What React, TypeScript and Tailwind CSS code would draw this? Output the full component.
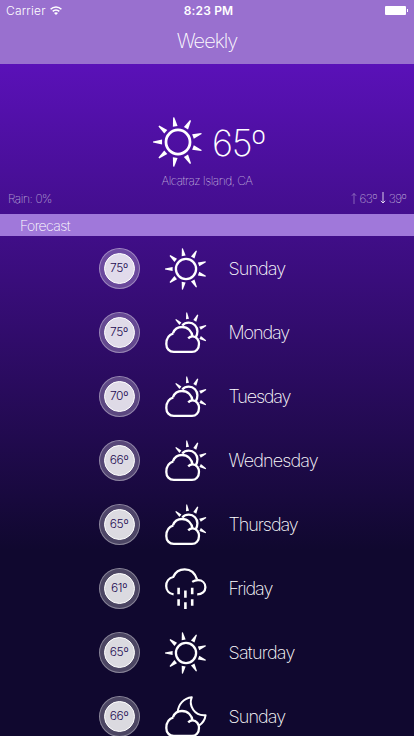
type IconName = "sun" | "partly" | "rain" | "night";

const RAY_ANGLES = [0, 40, 80, 120, 160, 200, 240, 280, 320];

function CloudShape() {
  return (
    <>
      <path d="M8 21.2C9.4 17.4 13 15 17 15C22.6 15 27 19 27.6 25" />
      <path d="M23.2 26.4C24.5 25 26 24.4 27.6 24.4C31.6 24.4 34 28 34 32C34 36.6 31 39.9 27 39.9H8.8C4.2 39.9 1.3 36.5 1.3 32C1.3 26.5 4 22.8 8.4 21.4" />
    </>
  );
}

function WeatherIcon({ name, className }: { name: IconName; className: string }) {
  return (
    <svg
      viewBox="0 0 42 42"
      className={className}
      fill="none"
      stroke="white"
      strokeWidth="2.3"
      strokeLinejoin="round"
    >
      {name === "sun" && (
        <>
          <circle cx="21" cy="21" r="10.1" />
          {RAY_ANGLES.map((a) => (
            <path key={a} d="M0 20.5L7.6 19V23L0 21.5Z" transform={`rotate(${a} 21 21)`} fill="white" stroke="none" />
          ))}
        </>
      )}
      {name === "partly" && (
        <>
          <CloudShape />
          <path d="M17.3 13.6C19 11.6 21.2 10.7 23.8 10.7C28.8 10.7 32.4 14.6 32.4 19.3C32.4 22 31.9 23.7 30.6 25.6" />
          <g fill="white" stroke="none">
            <path d="M21.2 .5H22.1L24 6.7L21 7.3Z" />
            <path d="M32.3 2.5L33.3 3L31.3 9.8L28.3 8Z" />
            <path d="M40.9 13L41.3 13.9L35.8 17.7L34.2 14.8Z" />
            <path d="M41.1 28.3L40.7 29.2L34.4 27L35.9 23.9Z" />
            <path d="M10.3 7.8L11 7L16.4 10.4L14.4 13Z" />
          </g>
        </>
      )}
      {name === "rain" && (
        <>
          <path d="M8.6 26.4C4 25.8 1.2 22.3 1.2 18C1.2 13.6 4 10 8.2 9C10.2 4.3 14.4 1.4 19.7 1.4C25.5 1.4 30 5 32 11.4" />
          <path d="M27.2 13.9C29 12.7 31 12.2 33 12.2C37.4 12.2 40.4 15.2 40.4 19.3C40.4 23.4 37 26.4 32.2 26.4" />
          <path d="M13.6 19.8V26.3M13.6 31.3V37.8M20.4 22.5V29.8M20.4 34.2V41M27.2 19.8V26.3M27.2 31.3V37.8" strokeWidth="2.6" />
        </>
      )}
      {name === "night" && (
        <>
          <CloudShape />
          <path d="M12.6 16.2C13.4 8.2 18.6 2.2 26.8 1.2C23.4 9.6 29.4 20.4 40.6 19.2C40 24 37.6 27.2 34.2 29.4" strokeWidth="2" />
        </>
      )}
    </svg>
  );
}

function TempBadge({ value }: { value: string }) {
  return (
    <div className="flex size-[41px] items-center justify-center rounded-full border border-white/35 bg-white/25">
      <div className="flex size-[31px] items-center justify-center rounded-full border-[1.5px] border-white bg-white/80 pb-px text-[12px] font-light leading-none tracking-[-0.3px] text-[#1c0a50]">
        {value}
      </div>
    </div>
  );
}

const days: { temp: string; icon: IconName; day: string; spacing: string }[] = [
  { temp: "75º", icon: "sun", day: "Sunday", spacing: "tracking-[-0.9px]" },
  { temp: "75º", icon: "partly", day: "Monday", spacing: "tracking-[-1.1px]" },
  { temp: "70º", icon: "partly", day: "Tuesday", spacing: "tracking-[-1.15px]" },
  { temp: "66º", icon: "partly", day: "Wednesday", spacing: "tracking-[-0.85px]" },
  { temp: "65º", icon: "partly", day: "Thursday", spacing: "tracking-[-1.05px]" },
  { temp: "61º", icon: "rain", day: "Friday", spacing: "tracking-[-1.05px]" },
  { temp: "65º", icon: "sun", day: "Saturday", spacing: "tracking-[-0.75px]" },
  { temp: "66º", icon: "night", day: "Sunday", spacing: "tracking-[-0.9px]" },
];

function StatusBar() {
  return (
    <div className="grid h-5 grid-cols-3 items-center pl-1.5 pr-[6px] text-[12px]">
      <div className="flex items-center gap-[4px] pt-px">
        <span className="font-light tracking-[0.2px]">Carrier</span>
        <svg viewBox="0 0 12 9" className="h-[9px] w-3" fill="none" stroke="white" strokeWidth="1.5">
          <path d="M.6 3.2C3.6 .1 8.4 .1 11.4 3.2" />
          <path d="M2.7 5.4C4.6 3.6 7.4 3.6 9.3 5.4" />
          <path d="M6 9L4 6.9C5.2 5.9 6.8 5.9 8 6.9Z" fill="white" stroke="none" />
        </svg>
      </div>
      <span className="pl-[3px] pt-px text-center font-semibold tracking-[0.15px]">8:23 PM</span>
      <div className="flex items-center justify-end gap-px">
        <div className="h-[9px] w-[21px] rounded-[1px] bg-white" />
        <div className="h-[3px] w-px bg-white" />
      </div>
    </div>
  );
}

export default function App() {
  return (
    <div className="flex h-[736px] w-[414px] flex-col overflow-hidden bg-[#10082f] bg-[linear-gradient(to_bottom,#5a11b8_64px,#10082f_550px)] font-['Inter',sans-serif] text-white">
      <header className="h-16 shrink-0 bg-[#9970cf]">
        <StatusBar />
        <h1 className="pt-[7px] text-center text-[20px] font-extralight leading-[28px] tracking-[-1px]">Weekly</h1>
      </header>

      <section className="h-[150px] shrink-0 pt-[53px]">
        <div className="flex h-[50px] items-center pl-[153px]">
          <WeatherIcon name="sun" className="size-[50px]" />
          <span className="pl-[9px] pt-[2px] text-[36px] font-extralight leading-none tracking-[-1.3px]">65º</span>
        </div>
        <p className="pt-[6px] text-center text-[12px] font-thin leading-[16px] tracking-[-0.5px]">Alcatraz Island, CA</p>
        <div className="flex justify-between px-2 pt-[2px] text-[12px] font-thin leading-[16px] tracking-[-0.4px]">
          <span>Rain: 0%</span>
          <span className="flex gap-[3px]">
            <span className="w-[6px] opacity-50">
              <svg viewBox="0 0 6 14" className="h-[14px] w-[6px]" fill="none" stroke="white" strokeWidth=".7">
                <path d="M3 13V2.5M.8 4.8L3 2.5L5.2 4.8" />
              </svg>
            </span>
            <span>63º</span>
            <svg viewBox="0 0 6 14" className="h-[14px] w-[6px]" fill="none" stroke="white" strokeWidth=".8">
              <path d="M3 1V12M.8 9.8L3 12L5.2 9.8" />
            </svg>
            <span>39º</span>
          </span>
        </div>
      </section>

      <h2 className="h-[22px] shrink-0 bg-[#a078da] pl-5 pt-[2px] text-[14px] font-extralight leading-[20px] tracking-[-0.6px]">Forecast</h2>

      <ul className="shrink-0">
        {days.map((d, i) => (
          <li key={i} className="flex h-16 items-center pl-[98.5px] pt-[1px]">
            <TempBadge value={d.temp} />
            <WeatherIcon name={d.icon} className="ml-[25px] size-[42px]" />
            <span className={`pl-[22px] text-[18px] font-extralight leading-[24px] ${d.spacing}`}>{d.day}</span>
          </li>
        ))}
      </ul>
    </div>
  );
}
